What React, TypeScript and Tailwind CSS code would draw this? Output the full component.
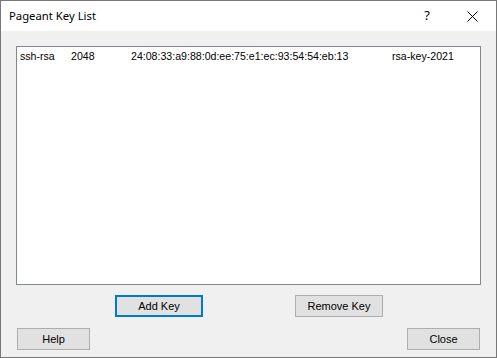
import React from "react";

const keys = [
  {
    type: "ssh-rsa",
    bits: "2048",
    fingerprint: "24:08:33:a9:88:0d:ee:75:e1:ec:93:54:54:eb:13",
    comment: "rsa-key-2021",
  },
];

const Button = ({ label, focused = false, className = "" }) => (
  <button
    className={
      "h-[22px] bg-[#e1e1e1] text-[11px] text-black leading-none " +
      (focused ? "border-2 border-[#0078d7] " : "border border-[#adadad] ") +
      className
    }
    style={{ fontFamily: '"Liberation Sans", Arial, sans-serif' }}
  >
    {label}
  </button>
);

export default function App() {
  return (
    <div className="w-[497px] h-[358px] border border-[#777777] bg-[#f0f0f0] flex flex-col">
      {/* title bar */}
      <div className="h-[30px] bg-white flex items-center shrink-0">
        <span
          className="ml-[8px] text-[11.3px] text-black"
          style={{ fontFamily: '"Noto Sans", "Open Sans", sans-serif' }}
        >
          Pageant Key List
        </span>
        <span
          className="ml-auto mr-[37px] text-[13px] text-black"
          style={{ fontFamily: '"Noto Sans", sans-serif' }}
        >
          ?
        </span>
        <svg width="11" height="11" viewBox="0 0 11 11" className="mr-[18px]">
          <path d="M0.5 0.5 L10.5 10.5 M10.5 0.5 L0.5 10.5" stroke="#000" strokeWidth="1" />
        </svg>
      </div>

      {/* body */}
      <div className="flex-1 flex flex-col px-[15px] pt-[15px]">
        <div
          className="h-[239px] bg-white border border-[#828790] text-[10.6px] text-black pt-[3px]"
          style={{ fontFamily: '"Liberation Sans", Arial, sans-serif' }}
        >
          {keys.map((k) => (
            <div key={k.fingerprint} className="flex h-[14px] items-center">
              <span className="ml-[3px] w-[51px]">{k.type}</span>
              <span className="w-[60px]">{k.bits}</span>
              <span className="w-[261px]">{k.fingerprint}</span>
              <span>{k.comment}</span>
            </div>
          ))}
        </div>

        <div className="flex mt-[10px]">
          <Button label="Add Key" focused className="ml-[99px] w-[88px]" />
          <Button label="Remove Key" className="ml-[92px] w-[88px]" />
        </div>

        <div className="flex mt-[11px]">
          <Button label="Help" className="ml-[1px] w-[73px] h-[21px]" />
          <Button label="Close" className="ml-auto mr-[1px] w-[73px] h-[21px]" />
        </div>
      </div>
    </div>
  );
}
